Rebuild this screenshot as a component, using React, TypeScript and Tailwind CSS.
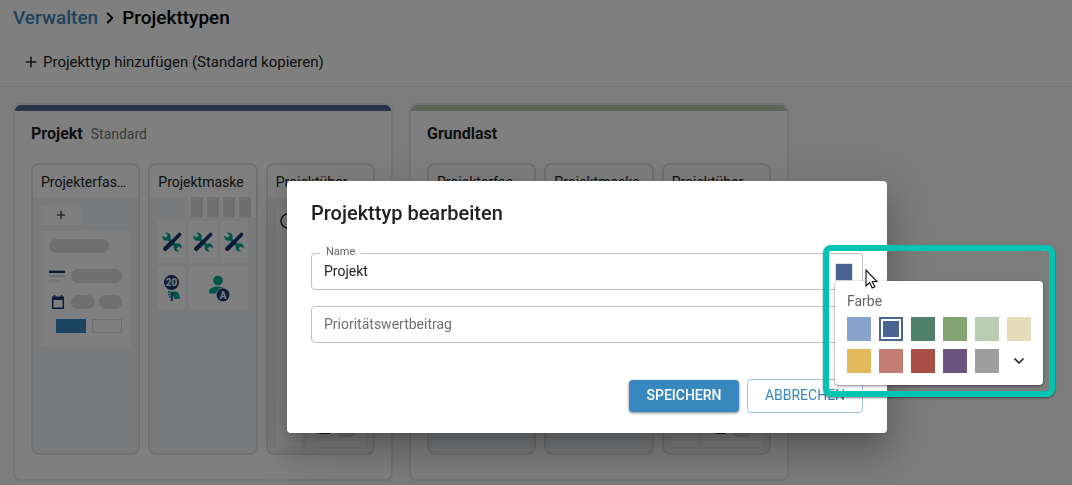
import { useState } from 'react';
import { ChevronDown, ChevronRight, Plus } from 'lucide-react';
import clsx from 'clsx';

const COLORS = [
  { name: 'Hellblau', bg: 'bg-[#86a3cc]' },
  { name: 'Blau', bg: 'bg-[#4a6491]' },
  { name: 'Dunkelgrün', bg: 'bg-[#50806b]' },
  { name: 'Grün', bg: 'bg-[#83a571]' },
  { name: 'Hellgrün', bg: 'bg-[#baccb1]' },
  { name: 'Beige', bg: 'bg-[#e6dcb9]' },
  { name: 'Gelb', bg: 'bg-[#e3ba5b]' },
  { name: 'Rosa', bg: 'bg-[#c47d74]' },
  { name: 'Rot', bg: 'bg-[#a85046]' },
  { name: 'Violett', bg: 'bg-[#6b5480]' },
  { name: 'Grau', bg: 'bg-[#9e9e9e]' },
];

function ToolsIcon() {
  return (
    <svg viewBox="0 0 20 20" className="size-5">
      <path d="m4.500 5 11 10.500" stroke="#00a693" strokeWidth="3" />
      <path
        d="M3.200.8 5.600 3l-.5 2-2 .6L.5 3.600C-.2 6.600 2 9.200 5 8.800c2.600-.4 4.200-2.800 3.500-5.200C7.800 1.300 5.500.1 3.200.8Z"
        fill="#00a693"
      />
      <path
        d="m17 19.200-2.400-2.200.5-2 2-.6 2.600 2c.7-3-1.500-5.600-4.500-5.200-2.600.4-4.200 2.800-3.500 5.200.7 2.300 3 3.500 5.300 2.800Z"
        fill="#00a693"
      />
      <path d="m3.200 16.800 7-6.600" stroke="#163a70" strokeWidth="4.400" strokeLinecap="round" />
      <path d="m9.500 10.800 8-8.400" stroke="#163a70" strokeWidth="3.600" strokeLinecap="round" />
    </svg>
  );
}

function CounterIcon() {
  return (
    <svg viewBox="0 0 20 28" className="h-7 w-5">
      <circle cx="9.500" cy="8.500" r="7.500" fill="#163a70" />
      <text x="9.500" y="12" textAnchor="middle" fontSize="10" fontWeight="700" fontFamily="Roboto, sans-serif" fill="#fff">
        20
      </text>
      <path d="M10 17.500h3c3 0 5 2.500 5 7.500h-6v-2.500h-2Z" fill="#00a693" />
      <path d="M6 18h3M6 20.500h3M7 23h2" stroke="#00a693" strokeWidth="1.500" />
      <path d="M10 18v8H8.500" fill="none" stroke="#163a70" strokeWidth="1.600" />
    </svg>
  );
}

function PersonIcon() {
  return (
    <svg viewBox="0 0 22 28" className="h-7 w-[22px]">
      <circle cx="10" cy="6.500" r="4.800" fill="#00a693" />
      <path d="M1.200 19.500v-1.800c0-3.500 4-5.200 8.800-5.200 3 0 5.500.7 7 2l-5 5Z" fill="#00a693" />
      <circle cx="15" cy="20.800" r="7.200" fill="#fff" />
      <circle cx="15" cy="20.800" r="6.500" fill="#163a70" />
      <text x="15" y="24.500" textAnchor="middle" fontSize="10" fontWeight="700" fontFamily="Roboto, sans-serif" fill="#fff">
        A
      </text>
    </svg>
  );
}

function CalendarIcon() {
  return (
    <svg viewBox="0 0 14 16" className="h-4 w-3.5">
      <path d="M1.700 4v10.300h10.600V4" fill="none" stroke="#163a70" strokeWidth="1.500" />
      <path d="M1 2.500h12V6H1Z" fill="#163a70" />
      <path d="M3.500 1v2.500M10.500 1v2.500" stroke="#163a70" strokeWidth="1.500" />
    </svg>
  );
}

function LinesIcon() {
  return (
    <svg viewBox="0 0 16 12" className="h-3 w-4">
      <path d="M0 .5h16" stroke="#a9bcd8" />
      <path d="M0 2h16" stroke="#163a70" strokeWidth="2" />
      <path d="M0 6h16" stroke="#d9dfe8" strokeWidth="2" />
      <path d="M0 10.500h11" stroke="#eaeaea" strokeWidth="2" />
    </svg>
  );
}

function Cursor() {
  return (
    <svg viewBox="0 0 14 21" className="h-[21px] w-3.5">
      <path d="M1 1v16l3.700-3.500L7.200 19l2.600-1.200-2.500-5.300H12Z" fill="#fff" stroke="#111" strokeWidth="1.100" />
    </svg>
  );
}

function Pill({ className }: { className: string }) {
  return <div className={clsx('h-3.5 rounded-full bg-[#dedede]', className)} />;
}

function EntryPreview() {
  return (
    <div className="flex flex-col items-start gap-1.5 p-2">
      <div className="flex h-5 w-10 items-center justify-center bg-white">
        <Plus className="size-3" strokeWidth={3} color="#555" />
      </div>
      <div className="w-full bg-white p-2 pb-3.5">
        <Pill className="w-[60px]" />
        <div className="mt-4 flex items-center gap-1.5">
          <LinesIcon />
          <Pill className="flex-1" />
        </div>
        <div className="mt-3 flex h-3.5 items-center gap-1">
          <div className="flex w-[18px] justify-center">
            <CalendarIcon />
          </div>
          <Pill className="flex-1" />
          <Pill className="flex-1" />
        </div>
        <div className="mt-2.5 flex justify-end gap-1.5">
          <div className="h-3.5 w-[30px] bg-[#3887be]" />
          <div className="h-3.5 w-[30px] border border-[#dedede]" />
        </div>
      </div>
    </div>
  );
}

function MaskPreview() {
  return (
    <div>
      <div className="ml-[37px] flex h-5 gap-1 bg-white pl-1">
        <div className="w-3 bg-[#dedede]" />
        <div className="w-3 bg-[#dedede]" />
        <div className="w-3 bg-[#dedede]" />
        <div className="w-3 bg-[#dedede]" />
      </div>
      <div className="grid grid-cols-3 gap-1 px-2 pt-1">
        {[0, 1, 2].map((i) => (
          <div key={i} className="flex h-[42px] items-center justify-center bg-white">
            <ToolsIcon />
          </div>
        ))}
        <div className="flex h-[42px] items-center justify-center bg-white">
          <CounterIcon />
        </div>
        <div className="col-span-2 flex h-[42px] items-center justify-center bg-white">
          <PersonIcon />
        </div>
      </div>
    </div>
  );
}

function OverviewPreview() {
  return (
    <div className="flex h-full gap-1 p-2 pb-1.5">
      <div className="w-[26px] bg-white pt-2 pl-1">
        <svg viewBox="0 0 16 16" className="size-4">
          <circle cx="8" cy="8" r="7" fill="none" stroke="#222" strokeWidth="1.500" />
          <path d="M8 4v4l3 2" fill="none" stroke="#222" strokeWidth="1.500" />
        </svg>
      </div>
      <div className="flex flex-1 flex-col justify-end bg-white px-2 pb-2.5">
        <div className="flex items-end gap-1.5">
          <svg viewBox="0 0 16 14" className="h-3.5 w-4">
            <path d="M5 0h11" stroke="#d9dfe8" strokeWidth="2" />
            <path d="M5 10h11" stroke="#163a70" strokeWidth="2" />
          </svg>
          <Pill className="w-5" />
        </div>
      </div>
    </div>
  );
}

function PreviewColumn({ title, children }: { title: string; children: React.ReactNode }) {
  return (
    <div className="flex h-[292px] min-w-0 flex-1 flex-col overflow-hidden rounded-lg border-2 border-[#e2e2e2] bg-[#f1f4f9]">
      <div className="h-8 shrink-0 bg-white px-2 pt-px text-sm leading-8 whitespace-nowrap">{title}</div>
      <div className="flex-1">{children}</div>
    </div>
  );
}

function TypeCard({ title, note, bar }: { title: string; note?: string; bar: string }) {
  return (
    <section className="w-[380px] overflow-hidden rounded-lg border-2 border-[#e9e9e9] bg-white">
      <div className={clsx('h-1.5', bar)} />
      <div className="px-4 pt-[11px] pb-6">
        <h2 className="flex items-baseline gap-2 text-base leading-6 font-bold">
          {title}
          {note && <span className="text-sm font-normal text-[#777]">{note}</span>}
        </h2>
        <div className="mt-[17px] flex gap-2">
          <PreviewColumn title="Projekterfas…">
            <EntryPreview />
          </PreviewColumn>
          <PreviewColumn title="Projektmaske">
            <MaskPreview />
          </PreviewColumn>
          <PreviewColumn title="Projektüber…">
            <OverviewPreview />
          </PreviewColumn>
        </div>
      </div>
    </section>
  );
}

function ColorPicker() {
  const [selected, setSelected] = useState(1);

  return (
    <div className="relative z-10">
      <button
        type="button"
        aria-label="Farbe wählen"
        className={clsx('block size-[18px] border border-[#dde1e8]', COLORS[selected].bg)}
      />
      <div className="absolute top-full left-0 w-[208px] rounded bg-white p-3 shadow-[0_1px_3px_rgba(0,0,0,0.5)]">
        <div className="mb-2 text-sm leading-4 text-[#666]">Farbe</div>
        <div className="grid grid-cols-6 gap-2">
          {COLORS.map((color, i) => (
            <button
              key={color.name}
              type="button"
              aria-label={color.name}
              onClick={() => setSelected(i)}
              className={clsx('size-6 p-0.5', color.bg)}
            >
              {i === selected && <span className="block size-5 border-2 border-white" />}
            </button>
          ))}
          <button type="button" aria-label="Mehr Farben" className="flex size-6 items-center justify-center">
            <ChevronDown className="size-4" strokeWidth={2.5} color="#222" />
          </button>
        </div>
      </div>
      {/* Highlight frame and pointer */}
      <div className="pointer-events-none absolute -top-[18px] -left-3 h-[152px] w-[232px] rounded-lg border-6 border-[#00c4b3] shadow-[0_1px_2px_rgba(0,0,0,0.5)]" />
      <div className="pointer-events-none absolute top-1.5 left-[30px]">
        <Cursor />
      </div>
    </div>
  );
}

function EditDialog() {
  return (
    <div className="fixed inset-0 flex items-start justify-center bg-black/50 pt-[181px] pl-[102px]">
      <form
        role="dialog"
        aria-labelledby="dialog-title"
        className="w-[600px] rounded bg-white px-6 pt-4 pb-5 shadow-[0_11px_15px_-7px_rgba(0,0,0,0.2),0_24px_38px_3px_rgba(0,0,0,0.14),0_9px_46px_8px_rgba(0,0,0,0.12)]"
      >
        <h2 id="dialog-title" className="text-xl leading-8 font-medium">
          Projekttyp bearbeiten
        </h2>
        <div className="relative mt-6 flex h-[37px] items-center rounded border border-[#c0c0c0] pr-[9px]">
          <label htmlFor="name" className="absolute -top-2 left-2 bg-white px-1.5 text-[11px] leading-3 text-[#666]">
            Name
          </label>
          <input id="name" defaultValue="Projekt" className="min-w-0 flex-1 px-3 pb-0.5 text-sm outline-none" />
          <ColorPicker />
        </div>
        <div className="mt-4 flex h-[37px] items-center rounded border border-[#c0c0c0]">
          <input
            aria-label="Prioritätswertbeitrag"
            placeholder="Prioritätswertbeitrag"
            className="min-w-0 flex-1 px-3 pb-0.5 text-sm outline-none placeholder:text-[#707070]"
          />
        </div>
        <div className="mt-9 flex items-center justify-end gap-2">
          <button
            type="button"
            className="h-8 w-[110px] rounded bg-[#3887be] pb-0.5 text-sm font-medium text-white shadow-[0_1px_3px_rgba(0,0,0,0.5)]"
          >
            SPEICHERN
          </button>
          <button
            type="button"
            className="h-[34px] w-[116px] rounded border border-[#9cc3df] pb-0.5 text-sm text-[#3887be]"
          >
            ABBRECHEN
          </button>
        </div>
      </form>
    </div>
  );
}

export default function App() {
  return (
    <div className="min-h-screen bg-[#f9f9f9] font-[Roboto,sans-serif] text-[#222]">
      <header className="border-b border-[#e4e4e4] bg-white px-[13px]">
        <h1 className="flex items-center gap-[3px] pt-1 text-[19px] leading-7 font-medium text-black">
          <a href="#verwalten" className="text-[#3887be]">
            Verwalten
          </a>
          <ChevronRight className="size-[18px]" strokeWidth={2.5} />
          Projekttypen
        </h1>
        <div className="flex h-[54px] items-center px-2.5 pt-1.5">
          <button type="button" className="flex items-center gap-1 text-[15px] leading-6">
            <Plus className="size-4" strokeWidth={2.25} />
            Projekttyp hinzufügen (Standard kopieren)
          </button>
        </div>
      </header>
      <main className="flex gap-4 px-[13px] pt-4">
        <TypeCard title="Projekt" note="Standard" bar="bg-[#4a6491]" />
        <TypeCard title="Grundlast" bar="bg-[#baccb1]" />
      </main>
      <EditDialog />
    </div>
  );
}
